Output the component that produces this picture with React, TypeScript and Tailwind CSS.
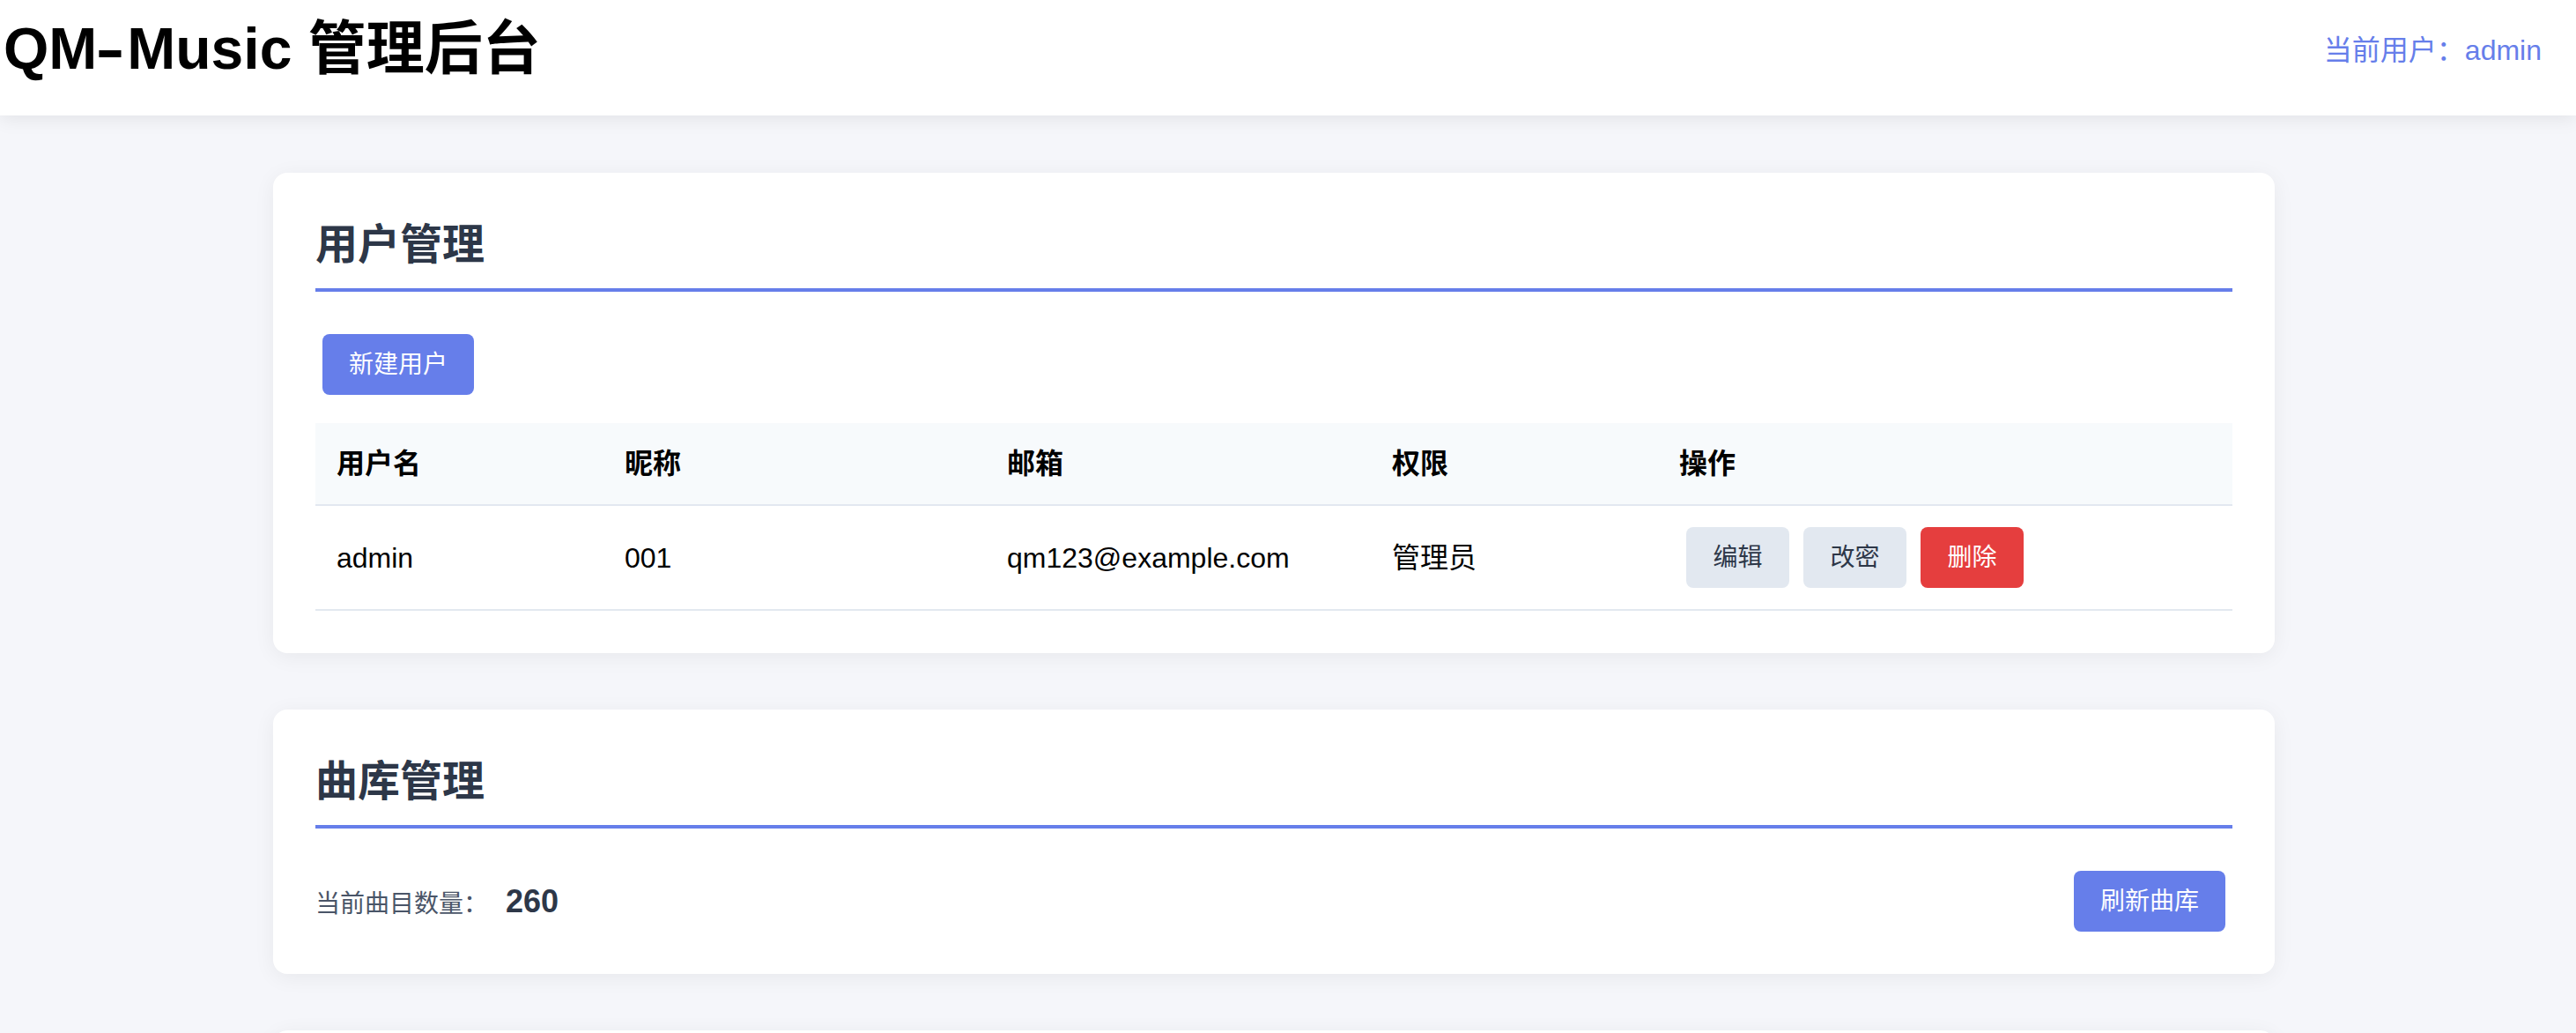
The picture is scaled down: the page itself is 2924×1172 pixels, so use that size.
import React from 'react';

interface User {
    username: string;
    nickname: string;
    email: string;
    role: string;
}

const users: User[] = [
    { username: 'admin', nickname: '001', email: 'qm123@example.com', role: '管理员' },
];

const font = "font-['Liberation_Sans','Noto_Sans_CJK_SC',sans-serif]";

function SectionTitle({ children }: { children: React.ReactNode }) {
    return (
        <h2 className="text-[48px] leading-[68px] font-bold text-[#2d3748] pb-[15px] border-b-[4px] border-[#667eea]">
            {children}
        </h2>
    );
}

function UserPanel() {
    return (
        <section className="bg-white rounded-[16px] shadow-[0_4px_24px_rgba(0,0,0,0.06)] p-[48px]">
            <SectionTitle>用户管理</SectionTitle>
            <div className="mt-[48px]">
                <button className="ml-[8px] h-[69px] px-[30px] rounded-[8px] bg-[#667eea] text-white text-[28px]">
                    新建用户
                </button>
            </div>
            <table className="mt-[32px] w-full border-collapse text-[32px] text-black table-fixed">
                <colgroup>
                    <col className="w-[327px]" />
                    <col className="w-[434px]" />
                    <col className="w-[437px]" />
                    <col className="w-[326px]" />
                    <col />
                </colgroup>
                <thead>
                    <tr className="bg-[#f7fafc] border-b-[2px] border-[#e2e8f0]">
                        <th className="text-left font-bold px-[24px] h-[93px] leading-[45px]">用户名</th>
                        <th className="text-left font-bold px-[24px] leading-[45px]">昵称</th>
                        <th className="text-left font-bold px-[24px] leading-[45px]">邮箱</th>
                        <th className="text-left font-bold px-[24px] leading-[45px]">权限</th>
                        <th className="text-left font-bold px-[24px] leading-[45px]">操作</th>
                    </tr>
                </thead>
                <tbody>
                    {users.map((u) => (
                        <tr key={u.username} className="border-b-[2px] border-[#e2e8f0]">
                            <td className="px-[24px] py-[24px]">{u.username}</td>
                            <td className="px-[24px] py-[24px]">{u.nickname}</td>
                            <td className="px-[24px] py-[24px]">{u.email}</td>
                            <td className="px-[24px] py-[24px]">{u.role}</td>
                            <td className="px-[24px] py-[24px]">
                                <div className="flex gap-[16px] pl-[8px]">
                                    <button className="h-[69px] w-[117px] rounded-[8px] bg-[#e2e8f0] text-[#2d3748] text-[28px]">编辑</button>
                                    <button className="h-[69px] w-[117px] rounded-[8px] bg-[#e2e8f0] text-[#2d3748] text-[28px]">改密</button>
                                    <button className="h-[69px] w-[117px] rounded-[8px] bg-[#e53e3e] text-white text-[28px]">删除</button>
                                </div>
                            </td>
                        </tr>
                    ))}
                </tbody>
            </table>
        </section>
    );
}

function LibraryPanel() {
    return (
        <section className="bg-white rounded-[16px] shadow-[0_4px_24px_rgba(0,0,0,0.06)] p-[48px]">
            <SectionTitle>曲库管理</SectionTitle>
            <div className="mt-[48px] flex items-center justify-between">
                <div className="flex items-baseline">
                    <span className="text-[28px] text-[#4a5568]">当前曲目数量：</span>
                    <span className="ml-[20px] text-[36px] font-bold text-[#2d3748]">260</span>
                </div>
                <button className="mr-[8px] h-[69px] px-[30px] rounded-[8px] bg-[#667eea] text-white text-[28px]">
                    刷新曲库
                </button>
            </div>
        </section>
    );
}

export default function App() {
    return (
        <div className={`${font} h-screen overflow-hidden bg-[#f5f6fa]`}>
            <header className="relative z-10 h-[131px] pb-[21px] bg-white shadow-[0_4px_20px_rgba(0,0,0,0.08)] flex items-center justify-between pl-[4px] pr-[39px]">
                <h1 className="text-[66px] leading-[80px] font-bold text-black">
                    QM<span className="inline-block scale-x-150 ml-[4px] mr-[8px]">-</span>Music 管理后台
                </h1>
                <div className="text-[32px] leading-[44px] text-[#667eea] pt-[3px]">当前用户：admin</div>
            </header>
            <main className="pl-[310px] pt-[65px]">
                <div className="w-[2272px] flex flex-col gap-[64px]">
                    <UserPanel />
                    <LibraryPanel />
                    <section className="bg-white rounded-[16px] shadow-[0_4px_24px_rgba(0,0,0,0.06)] h-[400px]" />
                </div>
            </main>
        </div>
    );
}
